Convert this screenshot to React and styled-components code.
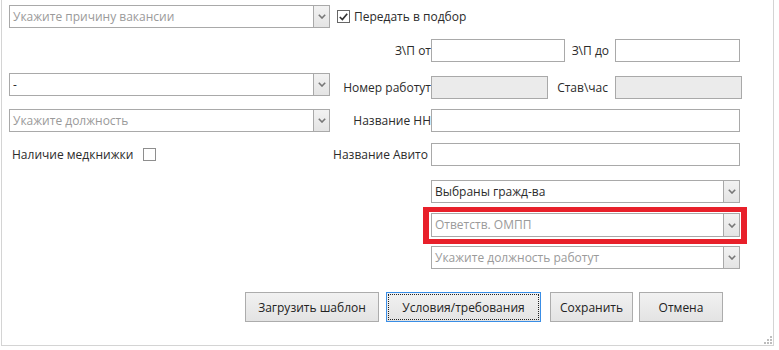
import styled, { createGlobalStyle } from "styled-components";

const GlobalStyle = createGlobalStyle`
  body {
    margin: 0;
    background: #fff;
    font-family: "Open Sans", "Noto Sans", sans-serif;
    font-size: 12px;
    color: #2b2b2b;
  }
  * { box-sizing: border-box; }
`;

const Panel = styled.div`
  position: relative;
  margin-left: 1px;
  width: 773px;
  height: 346px;
  border: 1px solid #d4d4d4;
  border-top: none;
  padding: 5px 0 0 7px;
`;

const Row = styled.div`
  display: flex;
  align-items: ${(p) => p.align || "center"};
  height: ${(p) => p.h || 23}px;
  margin-top: ${(p) => p.mt || 0}px;
`;

const Left = styled.div`
  display: flex;
  align-items: center;
  width: 321px;
  flex: none;
`;

const Label = styled.div`
  width: ${(p) => p.w}px;
  flex: none;
  text-align: right;
  padding-right: ${(p) => p.pr || 0}px;
  white-space: nowrap;
  align-self: center;
  margin-top: ${(p) => p.dy || 0}px;
`;

const Input = styled.div`
  width: ${(p) => p.w}px;
  height: ${(p) => p.h || 23}px;
  flex: none;
  border: 1px solid #a9a9a9;
  background: ${(p) => (p.disabled ? "#ebebeb" : "#fff")};
  margin-top: ${(p) => p.dy || 0}px;
`;

const ComboBox = styled.div`
  position: relative;
  display: flex;
  width: ${(p) => p.w}px;
  height: ${(p) => p.h || 23}px;
  flex: none;
  border: 1px solid #a9a9a9;
  background: #fff;
  margin-left: ${(p) => p.ml || 0}px;
`;

const ComboText = styled.div`
  flex: 1;
  padding-left: 3px;
  line-height: ${(p) => (p.h || 23) - 2}px;
  color: ${(p) => (p.placeholder ? "#9a9a9a" : "#2b2b2b")};
  white-space: nowrap;
  overflow: hidden;
`;

const ComboArrow = styled.div`
  width: 16px;
  flex: none;
  display: flex;
  align-items: center;
  justify-content: center;
  border-left: 1px solid #a9a9a9;
  background: linear-gradient(#f2f2f2, #e4e4e4);
`;

const Highlight = styled.div`
  position: absolute;
  left: -9px;
  top: -7px;
  right: -8px;
  bottom: -8px;
  border: 6px solid #e8202a;
  border-top-width: 5px;
  border-bottom-width: 5px;
  pointer-events: none;
`;

const CheckBox = styled.div`
  width: 13px;
  height: 13px;
  flex: none;
  border: 1px solid ${(p) => (p.checked ? "#666" : "#8e8e8e")};
  background: #fff;
  margin-left: ${(p) => p.ml || 0}px;
  display: flex;
  align-items: center;
  justify-content: center;
`;

const CheckText = styled.span`
  margin-left: ${(p) => p.ml || 4}px;
  white-space: nowrap;
`;

const ButtonBar = styled.div`
  display: flex;
  margin-top: 23px;
  margin-left: 236px;
  height: 30px;
`;

const Button = styled.button`
  position: relative;
  width: ${(p) => p.w}px;
  height: 30px;
  margin-left: ${(p) => p.ml || 0}px;
  padding: 0;
  font: inherit;
  color: #222;
  border: 1px solid ${(p) => (p.focused ? "#3a8ee6" : "#acacac")};
  background: linear-gradient(#f1f1f1, #e3e3e3);
  outline: ${(p) => (p.focused ? "1px dotted #222" : "none")};
  outline-offset: -3px;
`;

const Grip = styled.svg`
  position: absolute;
  right: 1px;
  bottom: 1px;
`;

const Chevron = () => (
  <svg width="8" height="5" viewBox="0 0 8 5">
    <polyline points="0.8,0.8 4,4 7.2,0.8" fill="none" stroke="#777" strokeWidth="1.6" />
  </svg>
);

const Combo = ({ w, text, placeholder, ml, h, children }) => (
  <ComboBox w={w} ml={ml} h={h}>
    <ComboText placeholder={placeholder} h={h}>{text}</ComboText>
    <ComboArrow>
      <Chevron />
    </ComboArrow>
    {children}
  </ComboBox>
);

const App = () => {
  return (
    <>
      <GlobalStyle />
      <Panel>
        <Row>
          <Left>
            <Combo w={321} text="Укажите причину вакансии" placeholder />
          </Left>
          <CheckBox checked ml={7}>
            <svg width="9" height="8" viewBox="0 0 9 8">
              <polyline points="0.8,4 3.4,6.6 8.2,0.8" fill="none" stroke="#333" strokeWidth="1.7" />
            </svg>
          </CheckBox>
          <CheckText>Передать в подбор</CheckText>
        </Row>

        <Row mt={11}>
          <Left />
          <Label w={101}>З\П от</Label>
          <Input w={134} />
          <Label w={50} pr={6}>З\П до</Label>
          <Input w={125} />
        </Row>

        <Row mt={11} h={26} align="flex-start">
          <Left>
            <Combo w={321} text="-" />
          </Left>
          <Label w={101} dy={3}>Номер работут</Label>
          <Input w={117} dy={3} disabled />
          <Label w={67} pr={7} dy={3}>Став\час</Label>
          <Input w={127} dy={3} disabled />
        </Row>

        <Row mt={10}>
          <Left>
            <Combo w={321} text="Укажите должность" placeholder />
          </Left>
          <Label w={101}>Название НН</Label>
          <Input w={309} />
        </Row>

        <Row mt={11}>
          <Left>
            <CheckText ml={3}>Наличие медкнижки</CheckText>
            <CheckBox ml={10} />
          </Left>
          <Label w={101} pr={3}>Название Авито</Label>
          <Input w={309} />
        </Row>

        <Row mt={14}>
          <Left />
          <Combo w={309} ml={101} text="Выбраны гражд-ва" />
        </Row>

        <Row mt={10} h={24}>
          <Left />
          <Combo w={309} h={24} ml={101} text="Ответств. ОМПП" placeholder>
            <Highlight />
          </Combo>
        </Row>

        <Row mt={9}>
          <Left />
          <Combo w={309} ml={101} text="Укажите должность работут" placeholder />
        </Row>

        <ButtonBar>
          <Button w={134}>Загрузить шаблон</Button>
          <Button w={155} ml={7} focused>Условия/требования</Button>
          <Button w={83} ml={9}>Сохранить</Button>
          <Button w={84} ml={6}>Отмена</Button>
        </ButtonBar>

        <Grip width="8" height="8" viewBox="0 0 8 8">
          <rect x="6" y="0" width="2" height="2" fill="#bdbdbd" />
          <rect x="3" y="3" width="2" height="2" fill="#bdbdbd" />
          <rect x="6" y="3" width="2" height="2" fill="#bdbdbd" />
          <rect x="0" y="6" width="2" height="2" fill="#bdbdbd" />
          <rect x="3" y="6" width="2" height="2" fill="#bdbdbd" />
          <rect x="6" y="6" width="2" height="2" fill="#bdbdbd" />
        </Grip>
      </Panel>
    </>
  );
};

export default App;
